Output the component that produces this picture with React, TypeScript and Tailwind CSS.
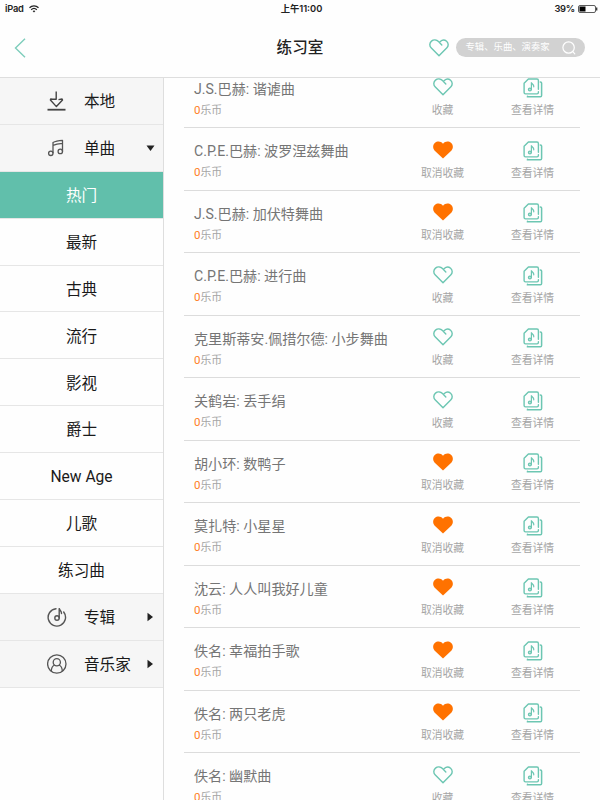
import React, { useState } from 'react';

interface Song {
  title: string;
  price: number;
  liked: boolean;
}

const initialSongs: Song[] = [
  { title: 'J.S.巴赫: 谐谑曲', price: 0, liked: false },
  { title: 'C.P.E.巴赫: 波罗涅兹舞曲', price: 0, liked: true },
  { title: 'J.S.巴赫: 加伏特舞曲', price: 0, liked: true },
  { title: 'C.P.E.巴赫: 进行曲', price: 0, liked: false },
  { title: '克里斯蒂安.佩措尔德: 小步舞曲', price: 0, liked: false },
  { title: '关鹤岩: 丢手绢', price: 0, liked: false },
  { title: '胡小环: 数鸭子', price: 0, liked: true },
  { title: '莫扎特: 小星星', price: 0, liked: true },
  { title: '沈云: 人人叫我好儿童', price: 0, liked: true },
  { title: '佚名: 幸福拍手歌', price: 0, liked: true },
  { title: '佚名: 两只老虎', price: 0, liked: true },
  { title: '佚名: 幽默曲', price: 0, liked: false },
];

const categories = ['热门', '最新', '古典', '流行', '影视', '爵士', 'New Age', '儿歌', '练习曲'];

const HeartIcon = ({ filled = false }: { filled?: boolean }) => (
  <svg width="20" height="18" viewBox="0 0 20 18" fill="none" className="block">
    {filled ? (
      <path
        d="M10 17.6L1.5 9.5C-.4 7.5-.3 3.7 1.8 2 4.3-.1 7.9.2 10 2.7 12.1.2 15.7-.1 18.2 2c2.1 1.7 2.2 5.5.3 7.5z"
        fill="#ff7200"
      />
    ) : (
      <path
        d="M12.8 5.9L9.5 2.6C7.6.7 4.5.5 2.5 2.1.4 3.9.3 6.9 2.1 8.7L10 16.7l7.900-8c1.800-1.800 1.700-4.800-.3-6.500-1.800-1.500-4.500-1.400-6.300.2"
        stroke="#6cc6b2"
        strokeWidth="1.4"
        strokeLinecap="round"
        strokeLinejoin="round"
      />
    )}
  </svg>
);

const DetailIcon = () => (
  <svg width="20" height="20" viewBox="0 0 20 20" fill="none" stroke="#6cc6b2" strokeWidth="1.4" strokeLinecap="round" className="block">
    <path d="M15.4 11.3V2.4c0-.9-.5-1.4-1.4-1.4H5.4L1.1 5.3v9.2c0 .9.5 1.4 1.4 1.4H14c.9 0 1.4-.5 1.4-1.4v-.7" strokeLinejoin="round" />
    <path d="M17.3 3.9c.9 0 1.3.4 1.3 1v12.600c0 .9-.4 1.300-1.200 1.300H4.500v-.6" strokeWidth="1.5" />
    <ellipse cx="6.900" cy="11.500" rx="1.500" ry="1.400" strokeWidth="1.2" fill="#6cc6b2" fillOpacity=".4" />
    <path d="M8.4 11.5V4.2c.2 1.8 2.6 2 2.4 4.600" strokeWidth="1.2" />
  </svg>
);

const DownloadIcon = () => (
  <svg width="20" height="20" viewBox="0 0 20 20" fill="none" stroke="#444" strokeWidth="1.4" strokeLinejoin="round">
    <path d="M9.200.500v7.700H5.500L3.700 8l-.3 1 6 6.600L15.500 9l-.4-1-3.600.6" />
    <path d="M.5 18.7h18" strokeWidth="1.8" />
  </svg>
);

const NotesIcon = () => (
  <svg width="20" height="20" viewBox="0 0 20 20" fill="none" stroke="#555" strokeWidth="1.3" strokeLinejoin="round">
    <circle cx="3.8" cy="15.3" r="2.2" />
    <circle cx="13.3" cy="13.4" r="2.2" />
    <path d="M6 15.3V4.5c3-1.800 6-2 9.500-2.200v11.100M6 7.300c3-1.500 6-1.800 9.500-2" />
  </svg>
);

const AlbumIcon = () => (
  <svg width="20" height="20" viewBox="0 0 20 20" fill="none" stroke="#555" strokeWidth="1.4" strokeLinecap="round">
    <path d="M9 1.7A8.700 8.700 0 1 0 16.700 5" />
    <circle cx="10" cy="11" r="2.2" />
    <path d="M12.2 11V1.200c.3 2.300 2.500 2.500 2.300 5.300" />
  </svg>
);

const ArtistIcon = () => (
  <svg width="20" height="20" viewBox="0 0 20 20" fill="none" stroke="#555" strokeWidth="1.3">
    <circle cx="9.8" cy="10" r="9.2" />
    <circle cx="9.8" cy="8.2" r="3.6" />
    <path d="M4.3 17.2c0-3.200 1.200-5.200 3.400-6.200M15.300 17.200c0-3.200-1.200-5.200-3.400-6.200" />
  </svg>
);

interface MenuRowProps {
  icon: React.ReactNode;
  label: string;
  arrow?: 'down' | 'right';
}

const MenuRow: React.FC<MenuRowProps> = ({ icon, label, arrow }) => (
  <button className="flex items-center w-full h-[46.9px] pt-[1px] pl-[47px] pr-[8px] border-b border-[#e6e6e6] bg-[#f6f6f6] text-[#1a1a1a]">
    {icon}
    <span className="ml-[17px] pt-[2px]">{label}</span>
    {arrow && (
      <svg width="9" height="10" viewBox="0 0 9 10" fill="#222" className="ml-auto">
        {arrow === 'down' ? <path d="M.5 2.5h8l-4 5.5z" /> : <path d="M1.5.8v8.400L7 5z" />}
      </svg>
    )}
  </button>
);

const StatusBar = () => (
  <div className="grid grid-cols-3 items-center h-[17px] px-[5px] font-['Inter','Noto_Sans_CJK_SC',sans-serif] text-[9.3px] font-semibold text-[#222]">
    <div className="flex items-center gap-[5px]">
      <span className="tracking-[-0.2px]">iPad</span>
      <svg width="10" height="8" viewBox="0 0 10 8" fill="none" stroke="#222" strokeWidth="1.3">
        <path d="M.5 2.8C3 .3 7 .3 9.5 2.8M2.200 4.700c1.600-1.500 4-1.500 5.600 0" />
        <path d="M3.600 5.900L5 7.400l1.400-1.500c-.8-.7-2-.7-2.800 0z" fill="#222" stroke="none" />
      </svg>
    </div>
    <span className="text-center pl-[3px]">上午11:00</span>
    <div className="flex items-center justify-end gap-[3px] -mr-[3px]">
      <span className="tracking-[-0.2px]">39%</span>
      <svg width="20" height="8" viewBox="0 0 20 8" fill="none">
        <rect x=".5" y=".5" width="17" height="7" rx="1.5" stroke="#333" strokeWidth=".8" />
        <rect x="1.5" y="1.5" width="6" height="5" fill="#000" />
        <path d="M18.7 2.5v3" stroke="#333" strokeWidth="1.3" />
      </svg>
    </div>
  </div>
);

const Header = () => (
  <div className="flex items-center h-[60px] pt-px pl-[14px] pr-[15.5px]">
    <button className="w-[225px]" aria-label="返回">
      <svg width="12" height="20" viewBox="0 0 12 20" fill="none" stroke="#7dcdbb" strokeWidth="1.4">
        <path d="M11 .8L1.500 10l9.500 9.200" />
      </svg>
    </button>
    <h1 className="w-[122px] pt-[3px] text-center text-[15.6px] font-medium text-[#222]">练习室</h1>
    <div className="ml-auto flex items-center gap-[7px]">
      <HeartIcon />
      <div className="flex items-center justify-between w-[129px] h-[19px] pl-[10px] pr-[9px] rounded-full bg-[#d2d2d2] text-[9.35px] text-white">
        <span>专辑、乐曲、演奏家</span>
        <svg width="14" height="14" viewBox="0 0 14 14" fill="none" stroke="#fff" strokeWidth="1.2" strokeLinecap="round">
          <circle cx="6.6" cy="6.5" r="5.7" />
          <path d="M10.8 10.6l2 2.3" />
        </svg>
      </div>
    </div>
  </div>
);

const App: React.FC = () => {
  const [songs, setSongs] = useState(initialSongs);
  const [active, setActive] = useState('热门');

  const toggleLike = (index: number) => {
    setSongs(songs.map((song, i) => (i === index ? { ...song, liked: !song.liked } : song)));
  };

  return (
    <div className="flex flex-col w-[600px] h-[800px] overflow-hidden bg-[#fefefe] font-['Roboto','Noto_Sans_CJK_SC',sans-serif]">
      <header className="shrink-0 h-[78px] border-b border-[#dedede]">
        <StatusBar />
        <Header />
      </header>

      <div className="flex flex-1 min-h-0">
        <aside className="shrink-0 w-[164px] border-r border-[#dedede] text-[15.6px] leading-5">
          <MenuRow icon={<DownloadIcon />} label="本地" />
          <MenuRow icon={<NotesIcon />} label="单曲" arrow="down" />
          {categories.map(name => (
            <button
              key={name}
              onClick={() => setActive(name)}
              className={`block w-full h-[46.9px] pt-[2.5px] border-b border-[#e6e6e6] ${active === name ? 'bg-[#61bfab] text-white' : 'text-[#1a1a1a]'}`}
            >
              {name}
            </button>
          ))}
          <MenuRow icon={<AlbumIcon />} label="专辑" arrow="right" />
          <MenuRow icon={<ArtistIcon />} label="音乐家" arrow="right" />
        </aside>

        <main className="flex-1 min-w-0 overflow-hidden pl-5 pr-5">
          <ul className="-mt-[12.5px]">
            {songs.map((song, index) => (
              <li key={song.title} className="flex h-[62.5px] pl-[10px] pt-[12.5px] border-b border-[#dcdcdc]">
                <div className="w-[203px] pt-[0.5px]">
                  <div className="text-[14.1px] leading-5 text-[#757575] whitespace-nowrap">{song.title}</div>
                  <div className="mt-[5px] text-[10.8px] leading-[14px] text-[#a5a5a5]">
                    <span className="text-[11.5px] leading-none text-[#ff7f27]">{song.price}</span>乐币
                  </div>
                </div>
                <button onClick={() => toggleLike(index)} className="flex flex-col items-center w-[91px] text-[10.8px] leading-[14px] text-[#a5a5a5]">
                  <HeartIcon filled={song.liked} />
                  <span className="mt-[8px]">{song.liked ? '取消收藏' : '收藏'}</span>
                </button>
                <button className="flex flex-col items-center w-[89px] text-[10.8px] leading-[14px] text-[#a5a5a5]">
                  <DetailIcon />
                  <span className="mt-[6px]">查看详情</span>
                </button>
              </li>
            ))}
          </ul>
        </main>
      </div>
    </div>
  );
};

export default App;
